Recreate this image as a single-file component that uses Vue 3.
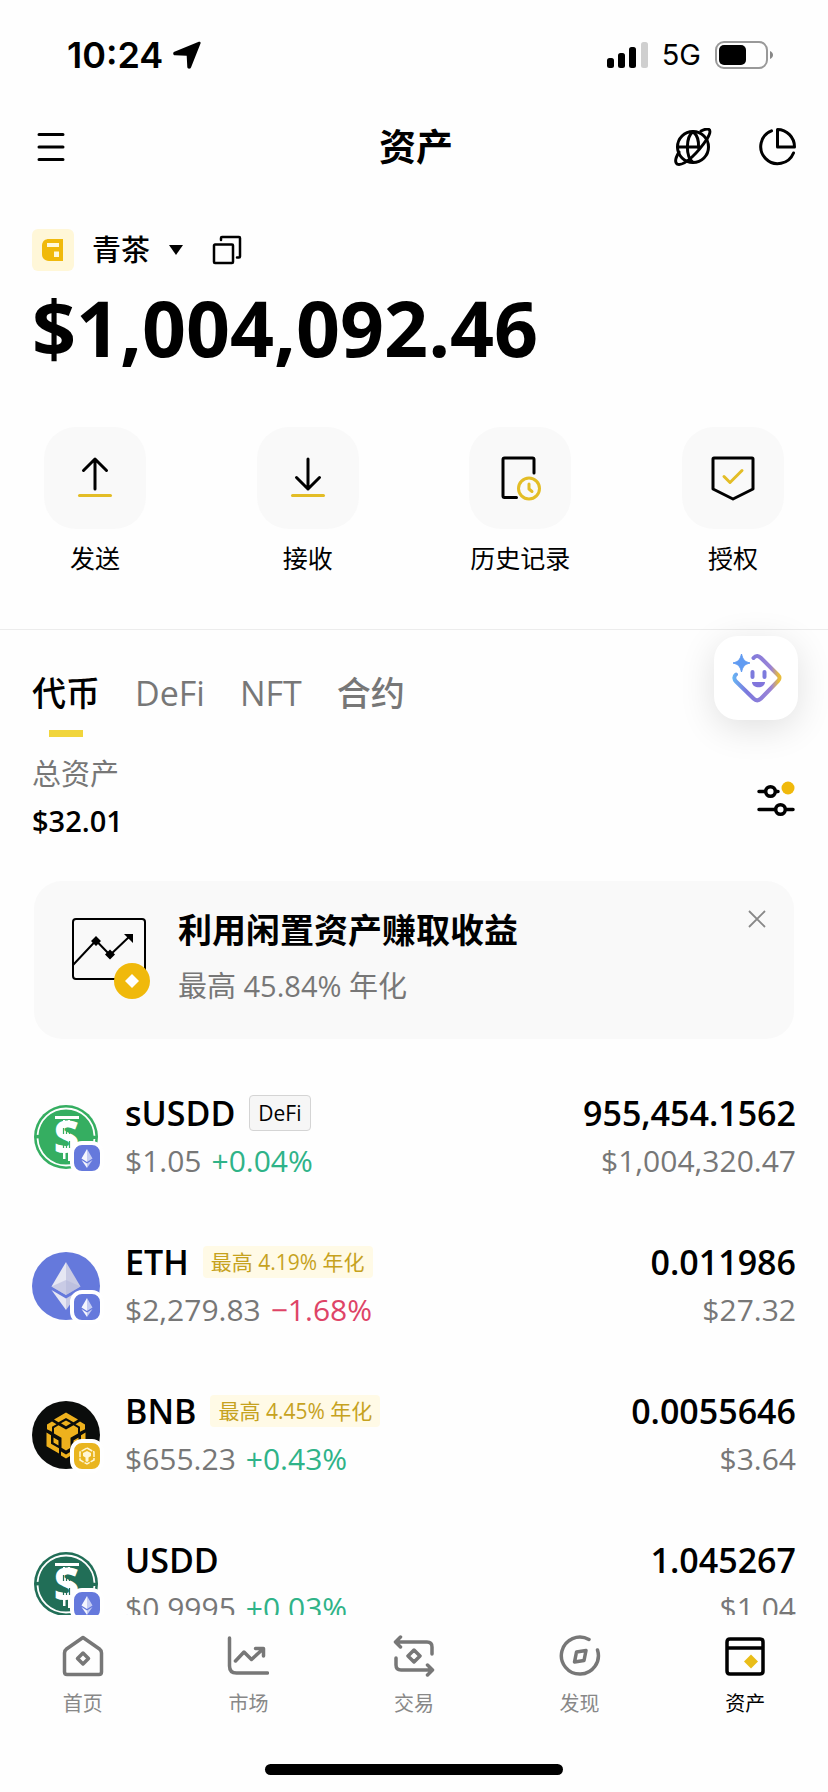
<script setup>
import { ref } from 'vue'

const actions = [
  { id: 'send', label: '发送' },
  { id: 'receive', label: '接收' },
  { id: 'history', label: '历史记录' },
  { id: 'approve', label: '授权' }
]

const tabs = ['代币', 'DeFi', 'NFT', '合约']
const activeTab = ref('代币')
const bannerOpen = ref(true)

const tokens = [
  { name: 'sUSDD', tag: 'DeFi', price: '$1.05', change: '+0.04%', up: true, amount: '955,454.1562', value: '$1,004,320.47', logo: 'usdd', tone: '#35ae61', chain: 'eth' },
  { name: 'ETH', apy: '最高 4.19% 年化', price: '$2,279.83', change: '−1.68%', up: false, amount: '0.011986', value: '$27.32', logo: 'eth', chain: 'eth' },
  { name: 'BNB', apy: '最高 4.45% 年化', price: '$655.23', change: '+0.43%', up: true, amount: '0.0055646', value: '$3.64', logo: 'bnb', chain: 'bnb' },
  { name: 'USDD', price: '$0.9995', change: '+0.03%', up: true, amount: '1.045267', value: '$1.04', logo: 'usdd', tone: '#216e57', chain: 'eth' }
]

const nav = [
  { id: 'home', label: '首页' },
  { id: 'market', label: '市场' },
  { id: 'trade', label: '交易' },
  { id: 'discover', label: '发现' },
  { id: 'assets', label: '资产' }
]
</script>

<template>
  <div class="app">
    <div class="status">
      <div class="status-side">
        <span class="time">10:24</span>
        <svg width="28" height="28" viewBox="0 0 28 28"><path d="M25.800 .8c1.200-.5 2.200.5 1.700 1.800L18 26.500c-.8 1.800-3.600 1.500-3.700-.5L13.700 14.800 2 14.300c-2-.1-2.500-2.700-.6-3.600z" fill="#000" /></svg>
      </div>
      <div class="status-side right">
        <svg width="42" height="28" viewBox="0 0 42 28">
          <rect x="1" y="17" width="7" height="10" rx="2.500" />
          <rect x="12" y="12" width="7" height="15" rx="2.500" />
          <rect x="23" y="6" width="7" height="21" rx="2.500" />
          <rect x="35" y="1" width="7" height="26" rx="2.500" fill="#cfcfcf" />
        </svg>
        <span class="network">5G</span>
        <svg width="60" height="28" viewBox="0 0 60 28">
          <rect x="1" y="1" width="51" height="26" rx="8" fill="none" stroke="#999" stroke-width="2" />
          <rect x="4" y="4" width="27" height="20" rx="5" />
          <path d="M55 10c4 1.500 4 6.500 0 8z" fill="#888" />
        </svg>
      </div>
    </div>

    <header class="header">
      <button class="icon-btn" aria-label="菜单">
        <svg width="30" height="30" viewBox="0 0 30 30"><path d="M3 2.500h24M3 15h24M3 27.500h24" class="ink" /></svg>
      </button>
      <h1>资产</h1>
      <div class="header-actions">
        <button class="icon-btn" aria-label="网络">
          <svg width="38" height="38" viewBox="0 0 38 38" class="ink">
            <circle cx="19" cy="19" r="15.500" />
            <path d="M19 3.500c-7.500 6-7.500 25 0 31M19 3.500c4 3.500 6 9 5.500 16" />
            <path d="M3.500 19h22M5 24C2 29 .500 34 3 36c3 1.500 9-1.500 15-7s11-12 15-18c3-5 4-8 2-9.500-2-1-5 0-8 1.500" />
          </svg>
        </button>
        <button class="icon-btn" aria-label="资产分布">
          <svg width="38" height="38" viewBox="0 0 38 38" class="ink">
            <path d="M13.500 2.800A17 17 0 1 0 35.500 25M19.500 1.500v17.500H36.500A17 17.500 0 0 0 19.500 1.500z" />
          </svg>
        </button>
      </div>
    </header>

    <main class="content">
      <section class="summary">
        <div class="wallet">
          <span class="wallet-logo">
            <svg width="22" height="22" viewBox="0 0 22 22">
              <path d="M7 0h14v22H7C2 21.500 0 19 0 15V6C.5 2 3 0 7 0z" fill="#f0b90b" />
              <path d="M5 4h12v4H5zM12 12.500h5V18h-5z" fill="#fff9dc" />
            </svg>
          </span>
          <button class="wallet-name">青茶
            <svg width="16" height="10" viewBox="0 0 16 10"><path d="M1 0h14L8 10z" /></svg>
          </button>
          <button class="icon-btn" aria-label="复制地址">
            <svg width="30" height="30" viewBox="0 0 30 30" class="ink thin"><path d="M3 9.500h17a1 1 0 0 1 1 1V27a1 1 0 0 1-1 1H3a1 1 0 0 1-1-1V10.500a1 1 0 0 1 1-1zM9 5V3a1 1 0 0 1 1-1h17a1 1 0 0 1 1 1v18.500a1 1 0 0 1-1 1h-2" /></svg>
          </button>
        </div>
        <p class="balance">$1,004,092.46</p>
      </section>

      <div class="actions">
        <button v-for="a in actions" :key="a.id" class="action">
          <span class="tile">
            <svg width="46" height="46" viewBox="0 0 46 46" class="ink">
              <template v-if="a.id === 'send'">
                <path d="M23 34V4M11.500 15.500 23 4l11.500 11.500" />
                <path d="M7.500 40.500h31" class="gold" />
              </template>
              <template v-else-if="a.id === 'receive'">
                <path d="M23 4v30M11.500 22.500 23 34l11.500-11.500" />
                <path d="M7.500 40.500h31" class="gold" />
              </template>
              <template v-else-if="a.id === 'history'">
                <path d="M19.500 42.500H7.500a1.500 1.500 0 0 1-1.500-1.500V4.500A1.500 1.500 0 0 1 7.500 3h28A1.500 1.500 0 0 1 37 4.500V18" />
                <circle cx="32" cy="33.500" r="10.500" class="gold" />
                <path d="M32 29v5l3 2.500" class="gold" />
              </template>
              <template v-else>
                <path d="M4 3h38a1 1 0 0 1 1 1v30L23 44 3 34V4a1 1 0 0 1 1-1z" />
                <path d="M14 21.500l6 6L32 15.500" class="gold" />
              </template>
            </svg>
          </span>
          <span class="action-label">{{ a.label }}</span>
        </button>
      </div>

      <section class="holdings">
        <button class="assistant" aria-label="智能助手">
          <svg width="52" height="52" viewBox="0 0 52 52">
            <defs>
              <linearGradient id="assistantStroke" gradientUnits="userSpaceOnUse" x1="2" y1="26" x2="51" y2="26">
                <stop offset="0" stop-color="#65b9f5" />
                <stop offset=".3" stop-color="#7b78dd" />
                <stop offset=".8" stop-color="#9b83d6" />
                <stop offset=".95" stop-color="#e8bd3c" />
              </linearGradient>
            </defs>
            <path d="M23.500 6c2.500-3 5-2.500 7.500 0l17 17c2 2 2 4 0 6L31 46.500c-2.500 2.500-5 2.500-7.500 0L6 29.500c-2-2-2.500-5 0-7" fill="none" stroke="url(#assistantStroke)" stroke-width="4" stroke-linecap="round" />
            <path d="M11.500 2c1.500 6 3 7.500 8.500 9-5.500 1.500-7 3-8.500 9C10 14 8.500 12.500 3 11c5.500-1.500 7-3 8.500-9z" fill="#609bf2" stroke="#609bf2" stroke-linejoin="round" />
            <path d="M22.500 20v5M34.500 20v5" stroke="#7d7bdd" stroke-width="4" stroke-linecap="round" />
            <path d="M22 30h13c0 7-13 7-13 0z" fill="#8175dc" />
          </svg>
        </button>

        <div class="tabs" role="tablist">
          <button v-for="t in tabs" :key="t" role="tab" class="tab" :class="{ active: t === activeTab }" :aria-selected="t === activeTab" @click="activeTab = t">{{ t }}</button>
        </div>

        <div class="total">
          <div>
            <p class="total-label">总资产</p>
            <p class="total-value">$32.01</p>
          </div>
          <button class="icon-btn" aria-label="筛选">
            <svg width="40" height="40" viewBox="0 0 40 40" class="ink filter">
              <path d="M3 13.500h6M20 13.500h2M3 31.500h16M31 31.500h6" />
              <circle cx="14.500" cy="13.500" r="4.800" /><circle cx="24.500" cy="31.500" r="4.800" />
              <circle cx="32" cy="10" r="6.500" fill="#f0b90b" stroke="none" />
            </svg>
          </button>
        </div>

        <aside v-if="bannerOpen" class="banner">
          <svg width="78" height="82" viewBox="0 0 78 82">
            <rect x="1" y="1" width="72" height="60" rx="3" fill="none" stroke="#000" stroke-width="2" />
            <path d="M1 47 24 22.500 38 37 58 18" fill="none" stroke="#000" stroke-width="2" />
            <path d="M24 18l5 5-5 5-5-5zM38 31.500l5 5-5 5-5-5zM52 16h9v9z" />
            <circle cx="60" cy="63" r="18" fill="#f0b90b" />
            <path d="M60 56l7 7-7 7-7-7z" fill="#fff" />
          </svg>
          <div class="banner-text">
            <h2>利用闲置资产赚取收益</h2>
            <p>最高 45.84% 年化</p>
          </div>
          <button class="icon-btn close" aria-label="关闭" @click="bannerOpen = false">
            <svg width="18" height="18" viewBox="0 0 18 18"><path d="M1 1l16 16M17 1L1 17" stroke="#888" stroke-width="1.800" /></svg>
          </button>
        </aside>

        <ul class="tokens">
          <li v-for="t in tokens" :key="t.name" class="token">
            <div class="coin">
              <svg width="68" height="68" viewBox="0 0 68 68">
                <template v-if="t.logo === 'usdd'">
                  <circle cx="34" cy="34" r="32" :fill="t.tone" />
                  <circle cx="34" cy="34" r="28.500" fill="none" stroke="#fff" stroke-width="1.800" stroke-dasharray="86 3.500" stroke-dashoffset="-2" />
                  <path d="M23 13h24v3H23zM31 17h2v3h-2zM36 17h2v3h-2zM31 49h2.500v7H31zM36 49h2.500v9H36z" fill="#fff" />
                  <text x="34.500" y="50" text-anchor="middle" class="mark">S</text>
                  <path d="M31.500 25v6M34.500 25v6M37.500 25v6M31.500 38v7M34.500 38v7M37.500 38v7" :stroke="t.tone" stroke-width="1.200" />
                </template>
                <template v-else-if="t.logo === 'eth'">
                  <circle cx="34" cy="34" r="34" fill="#6579dc" />
                  <path d="M34 10 19.500 34.500 34 43z" fill="#e6e7f3" /><path d="M34 10 48.500 34.500 34 43z" fill="#c9cbe4" />
                  <path d="M19.500 34.500 34 28l14.500 6.500L34 43z" fill="#b5b9dc" opacity=".6" />
                  <path d="M19.500 38 34 46.500V58z" fill="#e6e7f3" /><path d="M48.500 38 34 46.500V58z" fill="#c9cbe4" />
                </template>
                <template v-else>
                  <circle cx="34" cy="34" r="34" fill="#0b0d0c" />
                  <g fill="#eeb11d">
                    <path d="M34 11.500 46 18.500l-4.500 2.800L34 17l-7.500 4.300L22 18.500zM34 19.500l5 2.800-5 2.900-5-2.900z" />
                    <path d="M20 20.500l4.500 2.700-4.500 2.600v5l-5 -2.500V23.500zM48 20.500l-4.500 2.700 4.500 2.600v5l5-2.500V23.500z" />
                    <path d="M22 27l4.500-2.700L34 28.500l7.500-4.200L46 27v5.500l-7.500 4.300v10L34 49.500l-4.500-2.700v-10L22 32.500z" />
                    <path d="M14.500 31.500l4.500 2.800v8.500l8 4.500v5.200l-12.500-7.200zM53.500 31.500l-4.500 2.800v8.500l-8 4.500v5.200l12.500-7.200zM21.500 36.500l5 3v5l-5-3zM46.500 36.500l-5 3v5l5-3zM29 50.500l5 3 5-3v4L34 57.500l-5-3z" />
                  </g>
                </template>
              </svg>
              <span class="chain" :class="t.chain">
                <svg v-if="t.chain === 'eth'" width="26" height="26" viewBox="0 0 26 26">
                  <path d="M13 4 7.500 13.500 13 17zM7.500 15 13 18.500V23z" fill="#f4f5fd" /><path d="M13 4l5.500 9.500L13 17zM18.500 15 13 18.500V23z" fill="#c4ccf3" />
                </svg>
                <svg v-else width="26" height="26" viewBox="0 0 26 26">
                  <g fill="none" stroke="#fff6d4" stroke-width="1.500"><path d="M13 5l7 4v8l-7 4-7-4V9z" stroke-dasharray="6 1" /></g>
                  <path d="M9 10l4-2 4 2v3l-2.500 1.500V18L13 19l-1.500-1v-3.500L9 13z" fill="#fff6d4" />
                </svg>
              </span>
            </div>
            <div class="info">
              <div class="line">
                <span class="name">{{ t.name }}</span>
                <span v-if="t.tag" class="tag">{{ t.tag }}</span>
                <span v-if="t.apy" class="apy">{{ t.apy }}</span>
              </div>
              <div class="line sub"><span>{{ t.price }}</span><span :class="t.up ? 'up' : 'down'">{{ t.change }}</span></div>
            </div>
            <div class="holding">
              <div class="line amount">{{ t.amount }}</div>
              <div class="line value">{{ t.value }}</div>
            </div>
          </li>
        </ul>
      </section>
    </main>

    <nav class="nav">
      <a v-for="n in nav" :key="n.id" :href="'#' + n.id" :class="{ current: n.id === 'assets' }">
        <svg width="42" height="42" viewBox="0 0 42 42" class="nav-icon">
          <path v-if="n.id === 'home'" d="M21 2.500 37.500 14q2 1.500 2 4v19q0 2.500-2.500 2.500H5q-2.500 0-2.500-2.500V18q0-2.500 2-4zM21 18l5.500 5.500L21 29l-5.500-5.500z" />
          <path v-else-if="n.id === 'market'" d="M2.500 3v28q0 7 7 7H40.500M8.500 26l8.500-9 7.500 7.500L36 14M28.500 13.500h8V21" />
          <path v-else-if="n.id === 'trade'" d="M7.500 2 2.500 7l5 5M3 7h31q5 0 5 5v7M34.500 30l5 5-5 5M39 35H8q-5 0-5-5v-7M21 15l6 6-6 6-6-6z" />
          <path v-else-if="n.id === 'discover'" d="M30 4.500A18.500 18.500 0 1 0 38.500 15M17.500 17l9.500-1.500-2 10-9.500 1.500z" />
          <template v-else>
            <path d="M6 4h30q3 0 3 3v29q0 3-3 3H6q-3 0-3-3V7q0-3 3-3zM3 13h36" />
            <path d="M27 19.500l7 7-7 7-7-7z" fill="#e9bd18" stroke="none" />
          </template>
        </svg>
        <span>{{ n.label }}</span>
      </a>
    </nav>
    <div class="home-bar"></div>
  </div>
</template>

<style>
body { margin: 0; background: #fefefe; }
</style>

<style scoped>
.app {
  height: 100vh;
  display: flex;
  flex-direction: column;
  background: #fefefe;
  color: #000;
  font-family: "Open Sans", "Noto Sans", "Noto Sans CJK SC", sans-serif;
}
p, h1, h2, ul { margin: 0; padding: 0; }
svg { display: block; flex: none; }
button {
  border: 0;
  padding: 0;
  background: none;
  color: inherit;
  font: inherit;
  cursor: pointer;
}
.icon-btn { display: flex; }
.ink {
  fill: none;
  stroke: #000;
  stroke-width: 3;
  stroke-linecap: round;
  stroke-linejoin: round;
}
.thin { stroke-width: 2.500; }
.filter { stroke-width: 3.500; }
.gold { stroke: #e3bd26; }

.status {
  height: 110px;
  flex: none;
  display: flex;
  align-items: center;
  justify-content: space-between;
  padding: 0 53px 0 67px;
  font-family: Inter, sans-serif;
}
.status-side { display: flex; align-items: center; gap: 10px; }
.right { gap: 14px; }
.time { font-size: 36px; font-weight: 600; line-height: 40px; }
.network { font-size: 29px; line-height: 40px; }

.header {
  height: 74px;
  flex: none;
  display: grid;
  grid-template-columns: 1fr auto 1fr;
  align-items: center;
  padding: 0 32px 0 36px;
}
.header h1 { font-size: 37px; line-height: 48px; font-weight: 700; }
.header-actions { display: flex; justify-content: flex-end; gap: 46px; }

.content {
  flex: 1;
  min-height: 0;
  overflow-y: auto;
  scrollbar-width: none;
}
.summary { padding: 46px 32px 0; }
.wallet { display: flex; align-items: center; height: 40px; }
.wallet-logo {
  width: 42px;
  height: 42px;
  display: grid;
  place-items: center;
  background: #fff7d8;
  border-radius: 6px;
}
.wallet-name {
  display: flex;
  align-items: center;
  gap: 18px;
  margin: 0 28px 0 18px;
  font-size: 29px;
  line-height: 40px;
  font-weight: 500;
}
.balance { margin-top: 18px; font-size: 77px; line-height: 80px; font-weight: 700; }

.actions {
  display: flex;
  justify-content: space-between;
  padding: 59px 44px 56px;
  border-bottom: 1px solid #ececec;
}
.action { width: 102px; display: flex; flex-direction: column; align-items: center; gap: 14px; }
.tile {
  width: 102px;
  height: 102px;
  display: grid;
  place-items: center;
  background: #f9f9f9;
  border-radius: 32px;
}
.action-label { font-size: 25px; line-height: 30px; white-space: nowrap; }

.holdings { position: relative; padding: 43px 32px 0; }
.assistant {
  position: absolute;
  top: 6px;
  right: 30px;
  width: 84px;
  height: 84px;
  display: grid;
  place-items: center;
  background: #fff;
  border-radius: 24px;
  box-shadow: 0 8px 36px rgba(0, 0, 0, 0.12);
}
.tabs { display: flex; gap: 35px; }
.tab {
  position: relative;
  padding-bottom: 24px;
  font-size: 34px;
  line-height: 40px;
  font-weight: 500;
  color: #777;
}
.tab.active { color: #000; }
.tab.active::after {
  content: "";
  position: absolute;
  left: 50%;
  bottom: 0;
  width: 34px;
  height: 7px;
  margin-left: -17px;
  background: #f1d53c;
}
.total { display: flex; justify-content: space-between; align-items: center; margin-top: 19px; }
.total-label { font-size: 29px; line-height: 36px; color: #777; }
.total-value { margin-top: 11px; font-size: 29px; line-height: 36px; font-weight: 600; }

.banner {
  display: flex;
  align-items: flex-start;
  gap: 28px;
  margin: 42px 2px 0;
  padding: 35px 38px 33px;
  background: #f9f9f9;
  border-radius: 28px;
}
.banner > svg { margin-top: 2px; }
.banner-text { flex: 1; }
.banner h2 { font-size: 34px; line-height: 40px; margin-top: -6px; font-weight: 700; }
.banner p { margin-top: 16px; font-size: 29px; line-height: 40px; color: #777; }
.close { margin: -6px -10px 0 0; }

.tokens { list-style: none; margin-top: 54px; display: flex; flex-direction: column; gap: 61px; }
.token { display: flex; align-items: center; }
.coin { position: relative; margin-right: 25px; }
.mark { font-size: 44px; font-weight: 800; fill: #fff; }
.chain {
  position: absolute;
  right: -4px;
  bottom: -4px;
  border: 4px solid #fff;
  border-radius: 12px;
}
.chain.eth { background-color: #6579dc; }
.chain.bnb { background-color: #e9b520; }
.info { flex: 1; display: flex; flex-direction: column; gap: 8px; }
.holding { display: flex; flex-direction: column; gap: 8px; text-align: right; }
.line { height: 40px; line-height: 40px; white-space: nowrap; }
.info .line { display: flex; align-items: center; }
.name, .amount { font-size: 34px; font-weight: 600; }
.sub, .value { font-size: 30px; color: #777; }
.sub { gap: 10px; }
.up { color: #2fb388; }
.down { color: #de4467; }
.tag {
  margin-left: 14px;
  padding: 0 8px;
  font-size: 21px;
  line-height: 34px;
  border: 1px solid #d4d4d4;
  border-radius: 4px;
  background: #f6f6f6;
}
.apy {
  margin-left: 14px;
  padding: 0 8px;
  font-size: 21px;
  line-height: 32px;
  color: #c6a21e;
  background: #fffae6;
  border-radius: 4px;
}

.nav { flex: none; display: flex; padding-top: 20px; background: #fefefe; }
.nav a {
  flex: 1;
  display: flex;
  flex-direction: column;
  align-items: center;
  gap: 12px;
  color: #888;
  font-size: 20px;
  line-height: 30px;
  text-decoration: none;
}
.nav-icon {
  fill: none;
  stroke: #777;
  stroke-width: 3.500;
  stroke-linecap: round;
  stroke-linejoin: round;
}
.nav a.current { color: #000; }
.current .nav-icon { stroke: #000; }
.home-bar {
  flex: none;
  width: 36%;
  height: 11px;
  margin: 45px auto 17px;
  border-radius: 6px;
  background: #000;
}
</style>
